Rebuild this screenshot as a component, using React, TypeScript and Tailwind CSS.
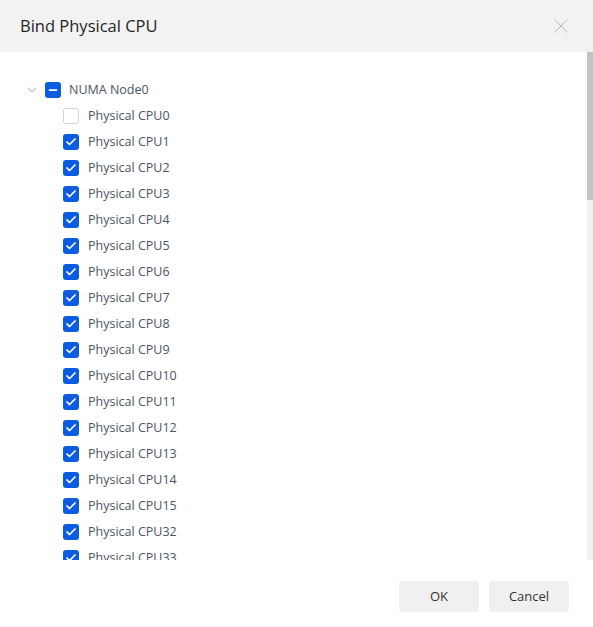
import { ChevronDown, X, Check, Minus } from 'lucide-react';

const cpus = (start: number, end: number) => {
  const out: number[] = [];
  for (let i = start; i <= end; i++) out.push(i);
  return out;
};

const NODES = [
  { name: 'NUMA Node0', cpus: [...cpus(0, 15), ...cpus(32, 47)] },
  { name: 'NUMA Node1', cpus: [...cpus(16, 31), ...cpus(48, 63)] },
];

function Box({ state }: { state: 'on' | 'off' | 'half' }) {
  if (state === 'off') {
    return <span className="w-4 h-4 rounded-[3px] border border-[#d0d3d9] bg-white shrink-0" />;
  }
  return (
    <span className="w-4 h-4 rounded-[3px] bg-[#0b5ce0] flex items-center justify-center shrink-0">
      {state === 'on' ? (
        <Check className="w-3 h-3 text-white" strokeWidth={3.5} />
      ) : (
        <Minus className="w-3 h-3 text-white" strokeWidth={3.5} />
      )}
    </span>
  );
}

export default function App() {
  return (
    <div className="w-[593px] h-[627px] bg-white flex flex-col" style={{ fontFamily: '"Open Sans", "Noto Sans", sans-serif' }}>
      {/* Header */}
      <div className="h-[52px] bg-[#f2f2f2] flex items-center justify-between pl-5 pr-[20px] shrink-0">
        <h2 className="text-[16.5px] text-[#262626]">Bind Physical CPU</h2>
        <X className="w-6 h-6 text-[#b8b8b8]" strokeWidth={1} />
      </div>

      {/* Tree + scrollbar */}
      <div className="h-[508px] flex shrink-0">
        <div className="flex-1 overflow-hidden">
          <div className="pt-[25px] pb-4">
            {NODES.map((node, ni) => (
              <div key={node.name}>
                <div className="h-[26px] flex items-center pl-6">
                  <ChevronDown className="w-4 h-4 text-[#9aa0a8]" strokeWidth={1.3} />
                  <span className="ml-[5px]"><Box state={ni === 0 ? 'half' : 'on'} /></span>
                  <span className="ml-2 text-[12.5px] text-[#4b5465]">{node.name}</span>
                </div>
                {node.cpus.map((c) => (
                  <div key={c} className="h-[26px] flex items-center pl-[63px]">
                    <Box state={ni === 0 && c === 0 ? 'off' : 'on'} />
                    <span className="ml-[9px] text-[12.5px] text-[#4b5465]">Physical CPU{c}</span>
                  </div>
                ))}
              </div>
            ))}
          </div>
        </div>
        <div className="w-[6px] bg-[#f1f1f4] flex flex-col">
          <div className="h-[148px] bg-[#c1c3c6]" />
        </div>
      </div>

      {/* Footer */}
      <div className="flex justify-end gap-[10px] pt-[21px] pr-6">
        <button className="w-20 h-[31px] rounded bg-[#f0f0f0] text-[13px] text-[#333]">OK</button>
        <button className="w-20 h-[31px] rounded bg-[#f0f0f0] text-[13px] text-[#333]">Cancel</button>
      </div>
    </div>
  );
}
